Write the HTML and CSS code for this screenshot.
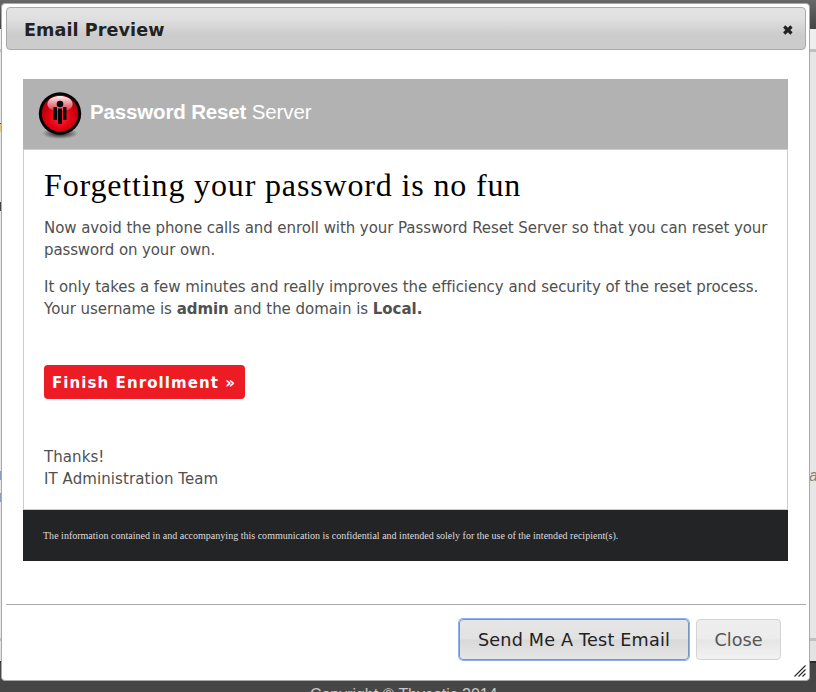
FILE: index.html
```html
<!DOCTYPE html>
<html lang="en">
<head>
<meta charset="utf-8">
<title>Email Preview</title>
<link rel="stylesheet" href="styles.css">
</head>
<body>
<div class="page">
  <div class="page-top"></div>
  <div class="page-band"></div>
  <div class="page-main">
    <div class="left-marks"><i class="mark gold"></i><i class="mark dark"></i><i class="mark blue"></i><i class="mark blue"></i></div>
    <span class="edge-text">a</span>
  </div>
  <div class="page-band low"></div>
  <div class="page-footer">Copyright © Thycotic 2014</div>
</div>
<section class="dialog">
  <header class="titlebar">
    <h2>Email Preview</h2>
    <svg class="close-icon" width="12" height="12" viewBox="0 0 12 12"><path d="M2.200 2.500l7.300 7M9.500 2.500l-7.300 7" stroke="#222" stroke-width="3.200" fill="none"/></svg>
  </header>
  <div class="content">
    <article class="email">
      <div class="brand">
        <svg class="logo" width="46" height="50" viewBox="0 0 46 50">
          <defs>
            <radialGradient id="red" cx=".5" cy=".6" r=".5"><stop offset="0" stop-color="#ff2a36"/><stop offset=".65" stop-color="#e30012"/><stop offset="1" stop-color="#b8000e"/></radialGradient>
            <linearGradient id="shine" x1="0" y1="0" x2="0" y2="1"><stop offset="0" stop-color="#fff" stop-opacity=".95"/><stop offset="1" stop-color="#fff" stop-opacity=".2"/></linearGradient>
            <radialGradient id="shade"><stop offset="0" stop-color="#000" stop-opacity=".9"/><stop offset="1" stop-color="#000" stop-opacity="0"/></radialGradient>
          </defs>
          <ellipse cx="23" cy="42.500" rx="18" ry="5.500" fill="url(#shade)"/>
          <circle cx="23" cy="22.500" r="21.200" fill="#050505"/>
          <circle cx="23" cy="22.500" r="18.200" fill="url(#red)"/>
          <path d="M10.500 12C12 7 17 5 23 5s11 2 12.500 7c1 5-4 8-12.500 8s-13.500-3-12.500-8z" fill="url(#shine)"/>
          <circle cx="23" cy="13" r="3.300" fill="#080808"/>
          <path d="M16.500 16h3.500v13h-3.500zM26 16h3.500v13H26zM21 17.500h4V33h-4z" fill="#080808"/>
        </svg>
        <div class="brand-name"><b>Password Reset</b> <span>Server</span></div>
      </div>
      <div class="body">
        <h1>Forgetting your password is no fun</h1>
        <p><span class="l1">Now avoid the phone calls and enroll with your Password Reset Server so that you can reset your</span><br><span class="l2">password on your own.</span></p>
        <p><span class="l3">It only takes a few minutes and really improves the efficiency and security of the reset process.</span><br><span class="l4">Your username is <b>admin</b> and the domain is <b>Local.</b></span></p>
        <a class="enroll">Finish Enrollment »</a>
        <p class="signature">Thanks!<br>IT Administration Team</p>
      </div>
      <div class="legal"><span>The information contained in and accompanying this communication is confidential and intended solely for the use of the intended recipient(s).</span></div>
    </article>
  </div>
  <footer class="actions">
    <button class="btn focused">Send Me A Test Email</button>
    <button class="btn quiet">Close</button>
  </footer>
  <svg class="grip" width="12" height="12" viewBox="0 0 12 12"><path d="M.5 11.500l11-11M4.500 11.500l7-7M8.500 11.500l3-3" stroke="#222" stroke-width="1.100"/></svg>
</section>
</body>
</html>
```

FILE: styles.css
```css
* { box-sizing: border-box; }
body { margin: 0; width: 816px; height: 692px; overflow: hidden; position: relative; font-family: "DejaVu Sans", Verdana, sans-serif; }
.page { height: 692px; display: flex; flex-direction: column; background: #e6e6e6; }
.page-top { height: 29px; background: linear-gradient(#686868, #444); }
.page-band { height: 23px; background: #eee; border-bottom: 3px solid #c0c0c0; }
.page-main { height: 586px; display: flex; align-items: flex-start; justify-content: space-between; }
.left-marks { width: 2px; display: flex; flex-direction: column; padding-top: 71px; }
.mark { height: 9px; }
.gold { background: #e8c27c; border-top: 1px solid #555; margin-bottom: 70px; }
.dark { background: #4a4048; margin-bottom: 260px; }
.blue { background: #8e9cc0; margin-bottom: 13px; }
.edge-text { font: italic 16px/20px "Liberation Sans", sans-serif; color: #8a8078; margin: 414px -2px 0 0; }
.page-band.low { border-top: 3px solid #c0c0c0; border-bottom: 0; background: #e3e3e3; }
.page-footer { height: 31px; flex: none; background: #464646; border-top: 2px solid #2b2b2b; color: #c8c8c8; font: 16px/18px "Liberation Sans", sans-serif; letter-spacing: -.04px; padding: 23px 0 0 310px; white-space: nowrap; overflow: hidden; }
.dialog { position: absolute; left: 1px; top: 3px; width: 809px; height: 678px; background: #fff; border: 1px solid #aaa; border-radius: 4px; padding: 3px 3px 0 4px; }
.titlebar { height: 43px; border: 1px solid #aaa; border-radius: 4px; background: linear-gradient(#e3e3e3, #e0e0e0 25%, #ccc 65%, #ccc); display: flex; align-items: center; justify-content: space-between; padding: 3px 11px 0 17px; }
.titlebar h2 { margin: 0; font-size: 17.600px; line-height: 24px; letter-spacing: .07px; color: #222; white-space: nowrap; }
.content { padding: 29px 18px 0 17px; height: 554px; }
.email { width: 765px; }
.brand { height: 70px; background: #b2b2b2; display: flex; align-items: flex-start; padding: 12px 0 0 14px; }
.brand-name { margin: 9px 0 0 7px; font: 20.500px/24px "Liberation Sans", sans-serif; color: #fff; letter-spacing: -.15px; white-space: nowrap; }
.body { height: 361px; border: 1px solid #ccc; padding: 16px 0 0 20px; font-size: 15px; line-height: 22px; color: #505050; white-space: nowrap; }
.body h1 { margin: 0 0 13px; font: 32px/38px "Liberation Serif", serif; letter-spacing: .85px; color: #000; }
.body p { margin: 0 0 15px; }
.l1 { letter-spacing: -.075px; }
.l2 { letter-spacing: -.12px; }
.l3 { letter-spacing: -.045px; }
.l4 { letter-spacing: -.04px; }
.enroll { display: flex; align-items: center; width: 201px; height: 34px; margin: 45px 0 47px; padding: 1px 8px 0; background: #ed1c24; border-radius: 4px; color: #fff; font-weight: 700; letter-spacing: 1.080px; }
.body .signature { letter-spacing: .08px; }
.legal { height: 51px; background: #232426; color: #ddd; font: 10px/12px "Liberation Serif", serif; letter-spacing: .011px; padding: 20px 0 0 20px; white-space: nowrap; }
.actions { border-top: 1px solid #aaa; display: flex; justify-content: flex-end; gap: 7px; padding: 14px 25px 0 0; }
.btn { height: 41px; border: 1px solid #d3d3d3; border-radius: 4px; font: 17.600px/24px "DejaVu Sans", Verdana, sans-serif; white-space: nowrap; padding: 0; color: #222; }
.focused { width: 230px; border-color: #7b93c4; box-shadow: 0 0 0 1px #8fb0ee; background: linear-gradient(#e6e6e6, #e2e2e2 49%, #d8d8d8 51%, #e6e6e6); letter-spacing: .2px; }
.quiet { width: 85px; color: #555; background: linear-gradient(#eee, #ececec 49%, #e5e5e5 51%, #f2f2f2); }
.grip { position: absolute; right: 3px; bottom: 3px; }
```
